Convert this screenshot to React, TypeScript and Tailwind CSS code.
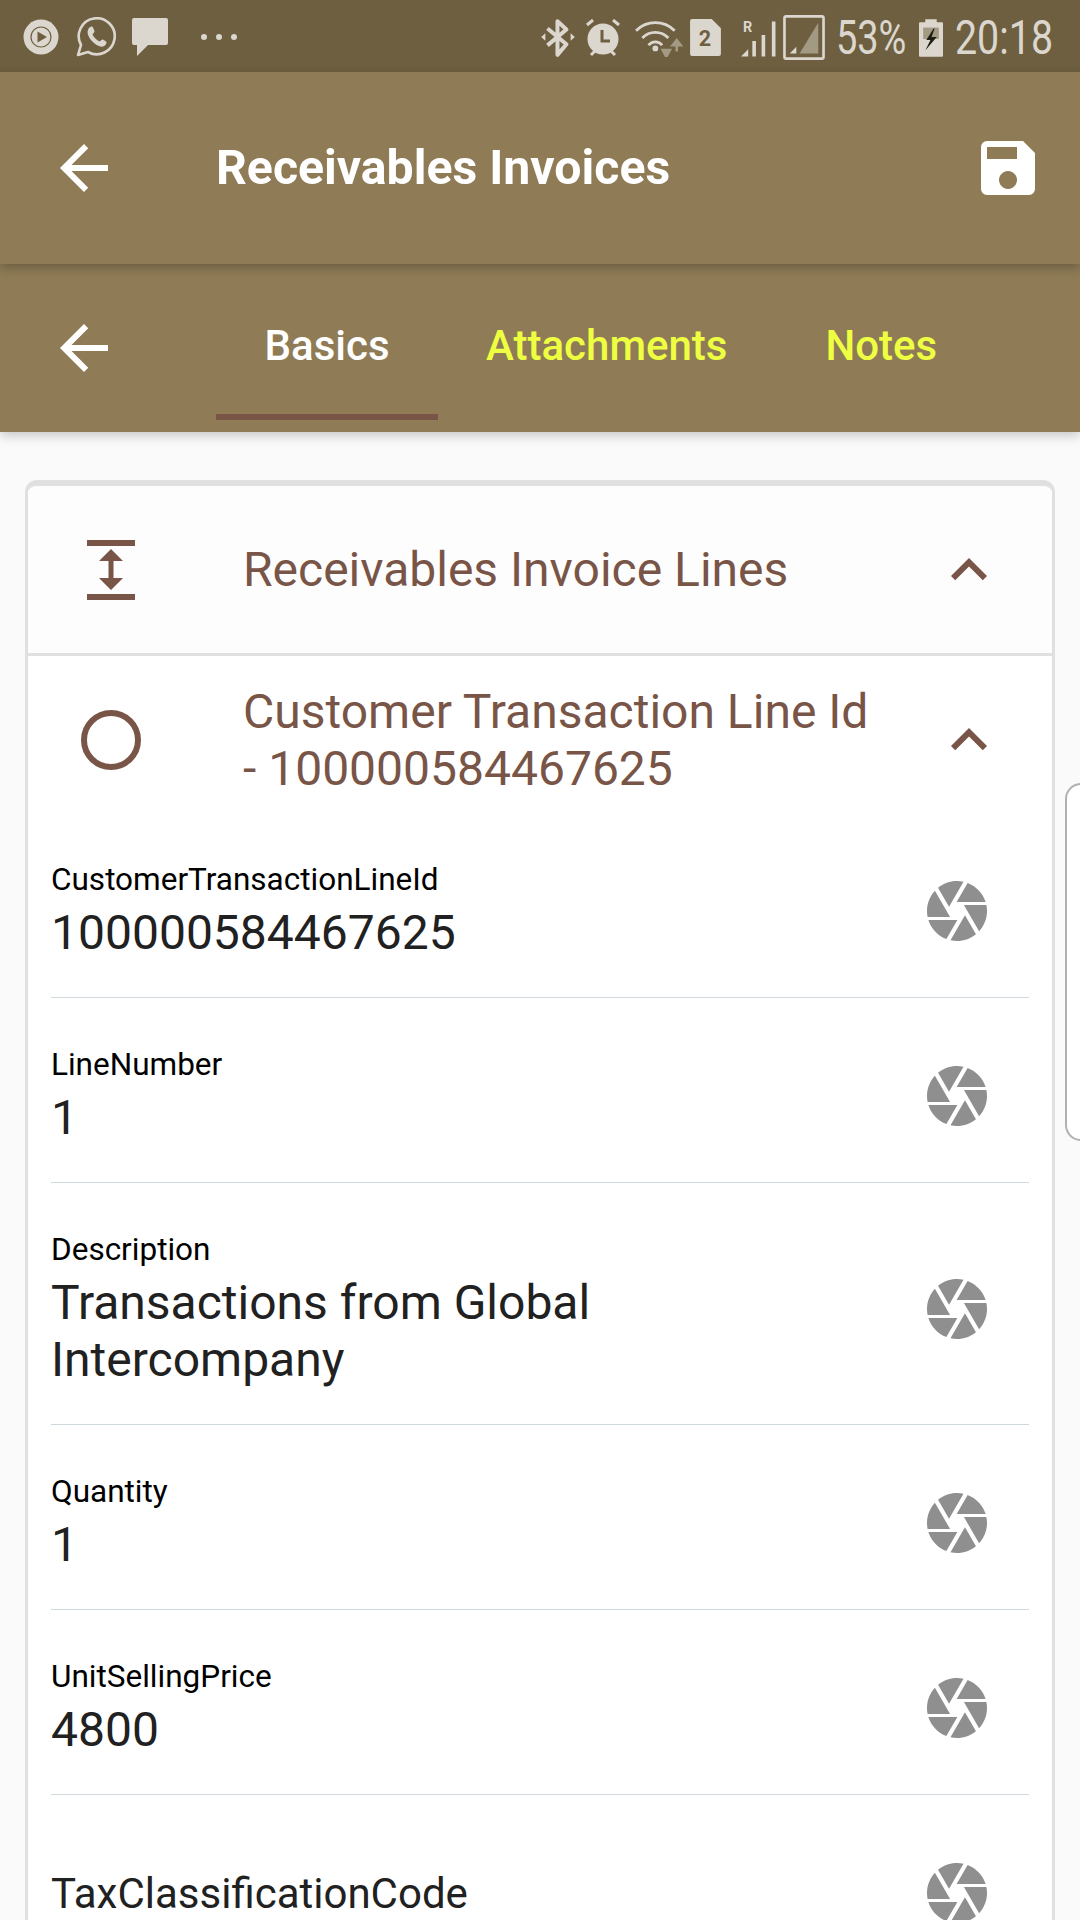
const Back = () => (
  <svg width="72" height="72" viewBox="0 0 24 24" fill="#fff" className="shrink-0">
    <path d="M20 11H7.83l5.59-5.59L12 4l-8 8 8 8 1.41-1.41L7.83 13H20v-2z" />
  </svg>
);

const Chevron = () => (
  <svg width="72" height="72" viewBox="0 0 24 24" fill="#795548" className="shrink-0">
    <path d="M12 8l-6 6 1.41 1.41L12 10.83l4.59 4.58L18 14z" />
  </svg>
);

const Aperture = () => (
  <svg width="72" height="72" viewBox="0 0 24 24" fill="#8f8f8f" className="shrink-0">
    <path d="M9.4 10.5l4.77-8.26C13.47 2.09 12.75 2 12 2c-2.4 0-4.6.85-6.32 2.25l3.66 6.35.06-.1zM21.54 9c-.92-2.92-3.15-5.26-6-6.34L11.88 9h9.66zm.26 1h-7.49l.29.5 4.76 8.25C21 16.97 22 14.61 22 12c0-.69-.07-1.35-.2-2zM8.54 12l-3.9-6.75C3.01 7.03 2 9.39 2 12c0 .69.07 1.35.2 2h7.49l-1.15-2zm-6.08 3c.92 2.92 3.15 5.26 6 6.34L12.12 15H2.46zm11.27 0l-3.9 6.76c.7.15 1.42.24 2.17.24 2.4 0 4.6-.85 6.32-2.25l-3.66-6.35-.93 1.6z" />
  </svg>
);

const C = "#dbd7cf";

const StatusLeft = () => (
  <div className="flex items-center pl-[23px] mt-[2px]">
    <svg width="36" height="36" viewBox="0 0 36 36">
      <circle cx="18" cy="18" r="17.5" fill={C} />
      <circle cx="18" cy="18" r="10" fill="none" stroke="#6e5f40" strokeWidth="1.2" />
      <path d="M14.5 12.5 L24 18 L14.5 23.5Z" fill="#6e5f40" />
    </svg>
    <svg width="40" height="40" viewBox="0 0 40 40" className="ml-[17px]">
      <path d="M2 38 L5 28 A18 18 0 1 1 12 35 Z" fill="none" stroke={C} strokeWidth="2.6" strokeLinejoin="round" />
      <path d="M13 11 C15 9 16.5 9 17 10.5 L18.5 14 C18.8 15 17 16.5 16.5 17.5 C18 20.5 20.5 23 23.5 24.5 C24.5 24 26 22 27 22.5 L30 24.5 C31 25 30.5 27 29 28.5 C27 30.5 23 30 18 26 C13 22 9.5 15 13 11 Z" fill={C} />
    </svg>
    <svg width="36" height="38" viewBox="0 0 36 38" className="ml-[16px]">
      <path d="M2 0 H34 A2 2 0 0 1 36 2 V25 A2 2 0 0 1 34 27 H16 L5 38 V27 H2 A2 2 0 0 1 0 25 V2 A2 2 0 0 1 2 0Z" fill={C} />
    </svg>
    <div className="flex items-center gap-[9px] ml-[33px]">
      <span className="w-[6px] h-[6px] rounded-full bg-[#dbd7cf]" />
      <span className="w-[6px] h-[6px] rounded-full bg-[#dbd7cf]" />
      <span className="w-[6px] h-[6px] rounded-full bg-[#dbd7cf]" />
    </div>
  </div>
);

const StatusRight = () => (
  <div className="flex items-center mt-[3px]">
    <svg width="34" height="40" viewBox="0 0 32 38">
      <path d="M6 10 L24 25 L15.5 35 V3 L24 11 L6 26" fill="none" stroke={C} strokeWidth="3.8" strokeLinejoin="round" />
      <path d="M0 18 L4 14.5 V21.5Z M32 18 L28 14.5 V21.5Z" fill={C} />
    </svg>
    <svg width="36" height="38" viewBox="0 0 34 38" className="ml-[10px]">
      <circle cx="17" cy="20" r="15.5" fill={C} />
      <path d="M1 6 L7 1 M33 6 L27 1 M5 36 L9 32 M29 36 L25 32" stroke={C} strokeWidth="3" fill="none" />
      <path d="M16 11 V22 H24" stroke="#6e5f40" strokeWidth="3" fill="none" />
    </svg>
    <svg width="48" height="38" viewBox="0 0 46 36" className="ml-[14px]">
      <path d="M1 11 A26 26 0 0 1 38 11 M7 18 A17 17 0 0 1 32 18 M13 25 A8 8 0 0 1 26 25" fill="none" stroke={C} strokeWidth="2.6" />
      <circle cx="19.5" cy="28" r="2.8" fill={C} />
      <path d="M30 29 V35 M26.5 29.5 H33.5 L30 36Z M40 24 V31 M36 25 L40 20 L44 25Z" stroke="#a39a84" strokeWidth="2.4" fill="#a39a84" />
    </svg>
    <svg width="31" height="37" viewBox="0 0 30 36" className="ml-[7px]">
      <path d="M2 0 H21 L30 9 V34 A2 2 0 0 1 28 36 H2 A2 2 0 0 1 0 34 V2 A2 2 0 0 1 2 0Z" fill={C} />
      <text x="14.5" y="26" fontSize="21" fontWeight="700" textAnchor="middle" fontFamily="Roboto, sans-serif" fill="#6e5f40">2</text>
    </svg>
    <svg width="35" height="38" viewBox="0 0 34 36" className="ml-[20px]">
      <text x="2" y="12" fontSize="14" fontWeight="700" fontFamily="Roboto, sans-serif" fill={C}>R</text>
      <path d="M0 36 L7 29 V36Z M11 21 H14.5 V36 H11Z M20 15 H23.5 V36 H20Z M30 2 H33.5 V36 H30Z" fill={C} />
    </svg>
    <svg width="42" height="45" viewBox="0 0 38 41" className="ml-[7px]">
      <rect x="1.2" y="1.2" width="35.6" height="38.6" rx="1.5" fill="none" stroke={C} strokeWidth="2.4" />
      <path d="M15 35 L32 7 V35Z" fill="#a39a84" />
      <path d="M6 35 L12 29 V35Z" fill={C} />
    </svg>
    <span className="ml-[11px] w-[70px] text-[48px] leading-[72px] text-[#dbd7cf] font-['Roboto',sans-serif] origin-left scale-x-[0.79] whitespace-nowrap">53%</span>
    <svg width="24" height="38" viewBox="0 0 23 36" className="ml-[13px]">
      <path d="M1 3 H6 V0 H17 V3 H22 A1 1 0 0 1 23 4 V35 A1 1 0 0 1 22 36 H1 A1 1 0 0 1 0 35 V4 A1 1 0 0 1 1 3Z" fill={C} />
      <rect x="4" y="8" width="15" height="11" fill="#a39a84" />
      <path d="M14 9 L7 20 H11 L6 30 L17 17 H12 L15 9Z" fill="#1f1c14" />
    </svg>
    <span className="ml-[12px] w-[97px] text-[48px] leading-[72px] text-[#dbd7cf] font-['Roboto',sans-serif] origin-left scale-x-[0.82] whitespace-nowrap">20:18</span>
  </div>
);

const Item = ({ label, value }: { label: string; value: string }) => (
  <div className="flex items-center justify-between border-b border-[#cfd8dc] pt-[47px] pb-[36px] pr-[36px]">
    <div className="min-w-0 w-[640px]">
      <div className="text-[31.5px] leading-[40px] text-black">{label}</div>
      <div className="text-[48px] leading-[57px] text-[#212121] mt-[4px]">{value}</div>
    </div>
    <div className="shrink-0">
      <Aperture />
    </div>
  </div>
);

export default function App() {
  return (
    <div className="w-[1080px] h-[1920px] overflow-hidden bg-[#fafafa] font-['Roboto',sans-serif] flex flex-col">
      <div className="h-[72px] shrink-0 bg-[#6e5f40] flex items-center justify-between pr-[28px]">
        <StatusLeft />
        <StatusRight />
      </div>
      <div className="relative z-10 h-[192px] shrink-0 bg-[#8f7c56] shadow-[0_4px_10px_rgba(0,0,0,0.25)] flex items-center pl-[48px] pr-[36px]">
        <Back />
        <div className="ml-[96px] text-[48.2px] font-bold text-white flex-1">Receivables Invoices</div>
        <svg width="72" height="72" viewBox="0 0 72 72" fill="#fff" className="shrink-0">
          <path fillRule="evenodd" d="M15 9 H51 L63 21 V57 A6 6 0 0 1 57 63 H15 A6 6 0 0 1 9 57 V15 A6 6 0 0 1 15 9Z M15 15 V27 H45 V15Z M36 39 A9 9 0 1 0 36.01 39Z" />
        </svg>
      </div>
      <div className="relative z-0 h-[168px] shrink-0 bg-[#8f7c56] shadow-[0_4px_10px_rgba(0,0,0,0.2)] flex items-stretch pl-[48px]">
        <div className="flex items-center"><Back /></div>
        <div className="ml-[96px] w-[222px] flex items-center justify-center border-b-[6px] border-[#795548] mb-[12px] pt-[13px] text-[42px] font-medium text-white">Basics</div>
        <div className="ml-[48px] mb-[12px] pt-[6px] flex items-center text-[42px] font-medium text-[#eeff41]">Attachments</div>
        <div className="ml-[98px] mb-[12px] pt-[6px] flex items-center text-[42px] font-medium text-[#eeff41]">Notes</div>
      </div>
      <div className="flex items-start pl-[25px] pt-[48px] overflow-hidden flex-1">
        <div className="w-[1030px] shrink-0 bg-white rounded-[12px] border-[3px] border-t-[6px] border-[#e0e0e0]">
          <div className="h-[170px] bg-[#fdfdfd] rounded-t-[9px] border-b-[3px] border-[#e0e0e0] flex items-center pl-[47px] pr-[47px]">
            <svg width="72" height="72" viewBox="0 0 72 72" fill="#795548" className="shrink-0">
              <path d="M12 6 H60 V12 H12Z M12 60 H60 V66 H12Z M36 15 L48 27 H38.5 V44 H48 L36 56 L24 44 H33.5 V27 H24Z" />
            </svg>
            <div className="ml-[96px] flex-1 text-[48px] leading-[57px] text-[#795548]">Receivables Invoice Lines</div>
            <Chevron />
          </div>
          <div className="flex items-center h-[168px] pl-[47px] pr-[47px]">
            <svg width="72" height="72" viewBox="0 0 72 72" className="shrink-0">
              <circle cx="36" cy="36" r="27" fill="none" stroke="#795548" strokeWidth="6" />
            </svg>
            <div className="ml-[96px] flex-1 text-[48px] leading-[57px] text-[#795548]">
              Customer Transaction Line Id<br />- 100000584467625
            </div>
            <Chevron />
          </div>
          <div className="px-[23px] -mt-[11px]">
            <Item label="CustomerTransactionLineId" value="100000584467625" />
            <Item label="LineNumber" value="1" />
            <Item label="Description" value="Transactions from Global Intercompany" />
            <Item label="Quantity" value="1" />
            <Item label="UnitSellingPrice" value="4800" />
            <div className="flex items-center justify-between pt-[62px] pr-[36px]">
              <div className="text-[42px] leading-[57px] text-[#212121]">TaxClassificationCode</div>
              <Aperture />
            </div>
          </div>
        </div>
        <div className="ml-[10px] mt-[303px] w-[40px] h-[358px] shrink-0 bg-white border-l-2 border-y-2 border-[#b0b0b0] rounded-l-[16px]" />
      </div>
    </div>
  );
}
